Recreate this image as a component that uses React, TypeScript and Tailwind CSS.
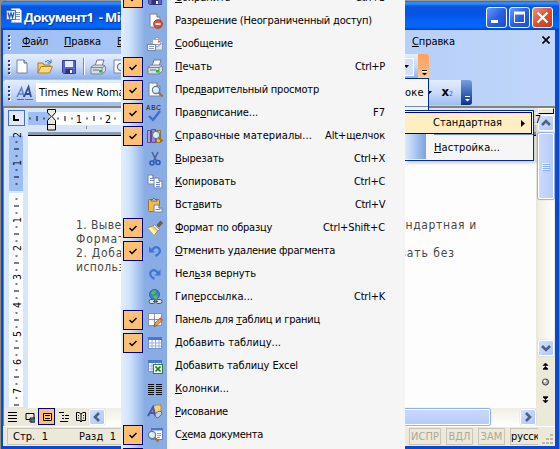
import React, { useLayoutEffect, useRef, useState } from 'react';

// Spreads a label over a known width by adjusting its letter spacing
const Fit: React.FC<{ text: string; width: number; className?: string }> = ({ text, width, className = '' }) => {
  const ref = useRef<HTMLSpanElement>(null);
  const [spacing, setSpacing] = useState(0);
  const i = text.indexOf('&');
  const plain = text.replace('&', '');

  useLayoutEffect(() => {
    if (ref.current) {
      setSpacing((width - ref.current.getBoundingClientRect().width) / plain.length);
    }
  }, [plain, width]);

  return (
    <span ref={ref} className={`inline-block whitespace-pre ${className}`} style={{ letterSpacing: spacing }}>
      {i < 0 ? plain : (
        <>
          {text.slice(0, i)}
          <span className="underline decoration-1 underline-offset-1">{text[i + 1]}</span>
          {text.slice(i + 2)}
        </>
      )}
    </span>
  );
};

const Page = ({ x = 3, y = 1, w = 10, h = 13 }) => (
  <>
    <path d={`M${x} ${y}h${w - 3}l3 3v${h - 3}h${-w}z`} fill="#fdfdff" stroke="#7684a8" />
    <path d={`M${x + w - 3} ${y}v3h3`} fill="#cfdcf2" stroke="#55658c" />
  </>
);

const Printer = () => (
  <>
    <path d="M5 7l2-6h7l-2 6z" fill="#fff" stroke="#6d7890" />
    <path d="M1 8l3-2h10l1.5 2v4L12 15H1z" fill="#d8dce4" stroke="#7b8496" />
    <path d="M1 8.5h11v6M12 8.5l3-1.5" fill="none" stroke="#7b8496" />
    <path d="M3 11h6" stroke="#697388" />
    <rect x="9" y="11" width="3" height="2.5" fill="#16c522" />
  </>
);

const Grid = () => (
  <>
    <rect x="1.5" y="2.5" width="13" height="11" fill="#fff" stroke="#7791cc" />
    <rect x="1" y="2" width="14" height="3" fill="#4a76cd" />
    <path d="M2 8h12M2 11h12M5 5v8M8.500 5v8M12 5v8" stroke="#9cb0dc" />
  </>
);

const Lens = ({ x = 9, y = 8 }) => (
  <>
    <path d={`M${x + 2.5} ${y + 2.5}l4 4`} stroke="#ad6b23" strokeWidth="2.300" />
    <circle cx={x} cy={y} r="3.600" fill="#d5efff" stroke="#6c7891" strokeWidth="1.200" />
    <path d={`M${x - 2} ${y}q0-2 2-2`} fill="none" stroke="#fff" />
  </>
);

const icons: Record<string, React.ReactNode> = {
  new: <Page />,
  open: (
    <>
      <path d="M1 14V4h5l1 2h6v3" fill="#f5cd62" stroke="#a8792a" />
      <path d="M1 14L4 7.500h11.500L12.500 14z" fill="#ffdc7d" stroke="#b5822b" />
      <path d="M8 3q3-3 5.500 0M14 .5V4h-3.500" fill="none" stroke="#4369ae" />
    </>
  ),
  save: (
    <>
      <path d="M1.500 1.500h13v13h-12l-1-1z" fill="#5966ca" stroke="#3a3f95" />
      <rect x="4" y="2" width="8" height="6" fill="#e9edfb" />
      <rect x="4.500" y="10" width="7" height="5" fill="#30357e" />
      <rect x="9" y="11" width="2" height="3" fill="#fff" />
    </>
  ),
  perm: (
    <>
      <Page />
      <circle cx="11" cy="11" r="4.300" fill="#e4532f" stroke="#b3371a" />
      <path d="M8.500 11h5" stroke="#fff" strokeWidth="2" />
    </>
  ),
  mail: (
    <>
      <path d="M4 6l6-5 5.500 5v7H4z" fill="#e5ebf6" stroke="#8f9cb8" />
      <path d="M5.500 3.500h8v5h-8z" fill="#fff" stroke="#a1abc0" />
      <rect x="11" y="4.500" width="2" height="2" fill="#e8643c" />
      <path d="M4 7l6 4 5.500-4v7H4z" fill="#dde6f5" stroke="#8f9cb8" />
      <rect x=".5" y="8.500" width="8" height="6" fill="#f8faff" stroke="#7785a5" />
      <path d="M2 10.500h5M2 12.500h5" stroke="#7f97cc" />
    </>
  ),
  print: <Printer />,
  preview: (
    <>
      <Page x={2} w={11} />
      <Lens />
    </>
  ),
  spell: (
    <>
      <text x="-1" y="4.500" fontSize="6.500" fontFamily="Liberation Sans" fill="#111" textLength="15" style={{ letterSpacing: 0 }}>ABC</text>
      <path d="M2 11l4 4 7-9" fill="none" stroke="#3f6fce" strokeWidth="2.400" />
    </>
  ),
  research: (
    <>
      <path d="M.5 2.500h3v12h-3z" fill="#b39ee0" stroke="#5f4b98" />
      <path d="M4.500 1.500h4v13h-4z" fill="#9c88d4" stroke="#5f4b98" />
      <path d="M9.500 2.500h4v12h-4z" fill="#e7bf58" stroke="#94702a" />
      <Lens x={9} y={7} />
    </>
  ),
  cut: (
    <>
      <path d="M5 1l4.500 9M11 1L6.500 10" stroke="#4d6383" strokeWidth="1.600" />
      <circle cx="5" cy="12" r="2" fill="none" stroke="#2a59b8" strokeWidth="1.600" />
      <circle cx="11" cy="11.500" r="2" fill="none" stroke="#2a59b8" strokeWidth="1.600" />
    </>
  ),
  copy: (
    <>
      <Page x={1} y={1} w={8} h={9} />
      <path d="M3 4.500h3M3 6.500h4" stroke="#6b8bd0" />
      <Page x={7} y={4} w={8} h={10} />
      <path d="M9 8.500h4M9 10.500h4M9 12.500h4" stroke="#6b8bd0" />
    </>
  ),
  paste: (
    <>
      <rect x="1.500" y="2.500" width="11" height="12" rx="1" fill="#efbd48" stroke="#9d7022" />
      <path d="M4 4V2.500h2L7 1l1 1.500h2V4z" fill="#e7eaf0" stroke="#77613a" />
      <Page x={7} y={8} w={8} h={7} />
      <path d="M8.500 12.500h5" stroke="#6b8bd0" />
    </>
  ),
  brush: (
    <>
      <path d="M10 5l3.500-4 2 2L12 7z" fill="#8a583b" stroke="#53352c" strokeWidth=".6" />
      <path d="M7.500 4.500l5 5-2 2-5-5z" fill="#e4e8f2" stroke="#657192" strokeWidth=".7" />
      <path d="M5.500 6L1 8l6 7 4-4z" fill="#f6df70" stroke="#a18231" strokeWidth=".8" />
      <path d="M1 8l3-.5L9 12l-2 3z" fill="#fff3b3" />
    </>
  ),
  undo: (
    <>
      <path d="M5 7q4-5 7-1.500T8.500 13" fill="none" stroke="#3d75d5" strokeWidth="2.200" />
      <path d="M2 3.500v6h6z" fill="#3d75d5" />
    </>
  ),
  redo: (
    <>
      <path d="M11 7Q7 2 4 5.500T7.500 13" fill="none" stroke="#3d75d5" strokeWidth="2.200" />
      <path d="M13.500 3.500v6h-6z" fill="#3d75d5" />
    </>
  ),
  link: (
    <>
      <circle cx="7.500" cy="5.500" r="5" fill="#3b83cd" stroke="#32619c" />
      <path d="M4 3q3-3 5-1l-1 3-3 1zM6 7l4-1 1 3-3 1.500z" fill="#56bd4e" />
      <rect x="2" y="10.500" width="6" height="4" rx="2" fill="#dde2ec" stroke="#4c566c" />
      <rect x="9" y="10.500" width="6" height="4" rx="2" fill="#dde2ec" stroke="#4c566c" />
      <path d="M6 12.500h5" stroke="#4c566c" />
    </>
  ),
  tables: (
    <>
      <rect x="1.500" y="1.500" width="13" height="12" fill="#fff" stroke="#8591b3" />
      <path d="M7.500 2v11M2 7.500h12" stroke="#8591b3" />
      <path d="M7 14.500l1-3.500 5.500-5 2 2-5.500 5.500z" fill="#e8a84a" stroke="#7c4c22" strokeWidth=".8" />
      <path d="M13 6l2 2" stroke="#d35a54" strokeWidth="2" />
    </>
  ),
  grid: <Grid />,
  excel: (
    <>
      <Grid />
      <rect x="6.500" y="6.500" width="9" height="9" fill="#eef8ee" stroke="#2c823a" />
      <path d="M8.500 8.500l5 5M13.500 8.500l-5 5" stroke="#23762f" strokeWidth="1.700" />
    </>
  ),
  columns: <path d="M1 3.500h6M9 3.500h6M1 5.500h6M9 5.500h6M1 7.500h6M9 7.500h6M1 9.500h6M9 9.500h6M1 11.500h6M9 11.500h6M1 13.500h6M9 13.500h6" stroke="#111" />,
  draw: (
    <>
      <path d="M6 3l3-2h5v7l-3 2H6z" fill="#f7d46b" stroke="#987c3e" strokeWidth=".8" />
      <path d="M1 12L6 3l2.500 9M3 9h4.500" fill="none" stroke="#4b54b3" strokeWidth="2" />
      <path d="M8 10l4-3q3 0 3 3l-4 4q-3 0-3-4z" fill="#c3cfe4" stroke="#5d6f91" />
    </>
  ),
  map: (
    <>
      <rect x="4.500" y="1.500" width="11" height="11" fill="#fff" stroke="#5f80c2" />
      <rect x="4" y="1" width="12" height="2.500" fill="#4a76cd" />
      <path d="M10 6.500h4M10 8.500h4M10 10.500h3" stroke="#839ed4" />
      <Lens x={5} y={8} />
    </>
  ),
  styles: (
    <>
      <path d="M0 12L4.500 3 7 12M2 9h4" fill="none" stroke="#6384c8" strokeWidth="1.600" />
      <path d="M7 12l4.500-10L14 12M9 9h4" fill="none" stroke="#304b98" strokeWidth="1.800" />
      <path d="M0 14.500h7" stroke="#4669b4" />
      <path d="M8 14.500h8" stroke="#d3474a" />
    </>
  ),
};

const Icon: React.FC<{ name: string; className?: string }> = ({ name, className = '' }) => (
  <svg className={`h-4 w-4 shrink-0 overflow-visible ${className}`} viewBox="0 0 16 16">{icons[name]}</svg>
);

const menu = [
  { label: '&Сохранить', w: 56, icon: 'save', on: true, key: 'Ctrl+S', kw: 30 },
  { label: 'Разрешение (Неограниченный доступ)', w: 197, icon: 'perm' },
  { label: '&Сообщение', w: 58, icon: 'mail' },
  { label: '&Печать', w: 37, icon: 'print', on: true, key: 'Ctrl+P', kw: 30 },
  { label: 'Пред&варительный просмотр', w: 144, icon: 'preview', on: true },
  { label: 'Прав&описание...', w: 83, icon: 'spell', on: true, key: 'F7', kw: 12 },
  { label: '&Справочные материалы...', w: 137, icon: 'research', on: true, key: 'Alt+щелчок', kw: 60 },
  { label: '&Вырезать', w: 49, icon: 'cut', key: 'Ctrl+X', kw: 31 },
  { label: '&Копировать', w: 61, icon: 'copy', key: 'Ctrl+C', kw: 31 },
  { label: 'Вст&авить', w: 47, icon: 'paste', key: 'Ctrl+V', kw: 30 },
  { label: '&Формат по образцу', w: 97, icon: 'brush', on: true, key: 'Ctrl+Shift+C', kw: 62 },
  { label: '&Отменить удаление фрагмента', w: 160, icon: 'undo', on: true },
  { label: 'Нел&ьзя вернуть', w: 81, icon: 'redo' },
  { label: 'Гип&ерссылка...', w: 78, icon: 'link', key: 'Ctrl+K', kw: 31 },
  { label: 'Панель для &таблиц и границ', w: 145, icon: 'tables', on: true },
  { label: '&Добавить таблицу...', w: 106, icon: 'grid', on: true },
  { label: '&Добавить таблицу Excel', w: 123, icon: 'excel' },
  { label: '&Колонки...', w: 54, icon: 'columns' },
  { label: '&Рисование', w: 53, icon: 'draw' },
  { label: 'С&хема документа', w: 88, icon: 'map', on: true },
  { label: '', w: 0, icon: '', on: true },
];

const Grip = () => (
  <div className="flex w-[3px] shrink-0 flex-col gap-[2px]">
    {[0, 1, 2, 3].map(i => <div key={i} className="h-[2px] w-[2px] bg-[#27417b] shadow-[1px_1px_0_#fff]" />)}
  </div>
);

const Chevron: React.FC<{ d: string }> = ({ d }) => (
  <div className="h-4 w-4 shrink-0 rounded-[2px] border border-white bg-gradient-to-br from-[#d3e0fd] to-[#aec6f6] shadow-[0_0_1px_#7c99d8]">
    <svg viewBox="0 0 14 14" className="h-[14px] w-[14px]"><path d={d} fill="none" stroke="#4d6185" strokeWidth="2.600" /></svg>
  </div>
);

const CaptionButton: React.FC<{ red?: boolean; children: React.ReactNode }> = ({ red, children }) => (
  <div className={`h-[21px] w-[21px] rounded-[3px] border border-white bg-gradient-to-br ${red ? 'from-[#ee9478] via-[#df4f2b] to-[#c43c18]' : 'from-[#6c98f6] via-[#2b60e4] to-[#1a4fd0]'}`}>
    <svg viewBox="0 0 19 19" className="h-[19px] w-[19px]">{children}</svg>
  </div>
);

// One ruler unit is 28.5px, quarters are drawn as dot, dash, dot
const Ruler: React.FC<{ length: number; zero: number; vertical?: boolean }> = ({ length, zero, vertical }) => {
  const marks: React.ReactNode[] = [];
  for (let q = -8; q < 72; q++) {
    const p = Math.round(zero + q * 7.12);
    if (p < -2 || p > length || q === 0) continue;
    const at = vertical ? `translate(7.5 ${p}) rotate(-90)` : `translate(${p} 6.5)`;
    marks.push(
      <g key={q} transform={at}>
        {q % 4 === 0
          ? <text y="4" textAnchor="middle" fontSize="10.500" fontFamily="DejaVu Sans Condensed, DejaVu Sans, sans-serif">{Math.abs(q / 4)}</text>
          : <rect x="-.5" y={q % 2 ? -1 : -2.5} width="1" height={q % 2 ? 2 : 5} />}
      </g>
    );
  }
  return (
    <svg className="block overflow-visible" width={vertical ? 14 : length} height={vertical ? length : 13}>
      {marks}
    </svg>
  );
};

const TitleBar = () => (
  <div className="flex h-[30px] shrink-0 items-center border-t border-[#9a9a92] bg-[linear-gradient(180deg,#0b6dee_0%,#3a94ff_7%,#0656e4_18%,#0553e0_45%,#0464fa_72%,#0366ff_88%,#0243c0_100%)] pr-[6px] pl-1">
    <svg viewBox="0 0 16 16" className="mt-px ml-px h-4 w-4 shrink-0">
      <path d="M5.500.5h8l2 2v12h-10z" fill="#fff" stroke="#9ab3e2" />
      <path d="M10 4.500h4M10 6.500h4M10 8.500h4M7 11.500h7" stroke="#7a95cf" />
      <rect x=".5" y="2.500" width="9" height="9" fill="#e8effc" stroke="#5173bd" />
      <path d="M2 4.500l1.500 5L5 5l1.500 4.500 1.500-5" fill="none" stroke="#2d55ac" strokeWidth="1.300" />
    </svg>
    <Fit text="Документ1  - Microsoft Word" width={172} className="mt-[3px] ml-[2px] font-['Open_Sans'] text-[13px] leading-4 font-bold text-white [font-stretch:normal] [text-shadow:1px_1px_1px_#0a2d88]" />
    <div className="mt-[3px] ml-auto flex gap-[2px]">
      <CaptionButton><path d="M4 13.500h7" stroke="#fff" strokeWidth="3" /></CaptionButton>
      <CaptionButton><path d="M4.500 5v9.500h10V5" fill="none" stroke="#fff" /><path d="M4 5h11" stroke="#fff" strokeWidth="3" /></CaptionButton>
      <CaptionButton red><path d="M4.500 4.500l10 10M14.500 4.500l-10 10" stroke="#fff" strokeWidth="2.200" /></CaptionButton>
    </div>
  </div>
);

const Toolbars = () => (
  <div className="h-[76px] shrink-0 bg-gradient-to-r from-[#9ebef5] to-[#c0d6fa]">
    <div className="flex h-6 items-center pr-[5px] pl-[5px]">
      <Grip />
      <Fit text="&Файл" width={26} className="ml-[11px]" />
      <Fit text="&Правка" width={37} className="ml-4" />
      <Fit text="&Вид" width={20} className="ml-4" />
      <Fit text="&Справка" width={43} className="ml-auto" />
      <svg className="ml-[87px] h-2 w-2 -translate-y-[2px]" viewBox="0 0 8 8"><path d="M.5.5l7 7M7.500.5l-7 7" stroke="#000" strokeWidth="1.700" /></svg>
    </div>
    <div className="flex h-[25px] w-[426px] overflow-hidden rounded-[3px] bg-gradient-to-b from-[#e3edfd] via-[#c8dbfa] to-[#8caeea]">
      <div className="flex w-[415px] items-center pl-[5px]">
        <Grip />
        <Icon name="new" className="ml-[3px]" />
        <Icon name="open" className="ml-[7px]" />
        <Icon name="save" className="ml-2" />
        <div className="ml-[6px] h-[17px] w-px bg-[#6a8ccb] shadow-[1px_0_0_#fff]" />
        <Icon name="print" className="ml-[6px]" />
        <Icon name="preview" className="ml-[6px]" />
        <div className="mr-1 ml-auto flex h-[18px] w-4 items-center justify-center border border-white bg-[#d1e1fb]">
          <svg viewBox="0 0 5 3" className="h-[3px] w-[5px]"><path d="M0 0h5L2.500 3z" /></svg>
        </div>
      </div>
      <div className="relative w-[11px] bg-gradient-to-b from-[#ffa15e] via-[#ffad70] to-[#ffd3a0]">
        <svg viewBox="0 0 7 8" className="absolute bottom-[2px] left-[3px] h-2 w-[7px]">
          <path d="M1 1.500h5" stroke="#000" />
          <path d="M1 2.500h5" stroke="#fff" />
          <path d="M1 4h5L3.500 6.500z" />
        </svg>
      </div>
    </div>
    <div className="mt-px flex h-[25px] w-[469px] overflow-hidden rounded-[3px] bg-gradient-to-b from-[#e3edfd] via-[#c8dbfa] to-[#9dbcf0]">
      <div className="flex w-[458px] items-center pl-[5px]">
        <Grip />
        <Icon name="styles" className="ml-[6px]" />
        <div className="ml-[3px] flex h-[19px] w-[120px] items-center bg-white pl-[3px]"><Fit text="Times New Roman" width={92} /></div>
        <svg viewBox="0 0 5 3" className="ml-auto h-[3px] w-[5px]"><path d="M0 0h5L2.500 3z" /></svg>
        <div className="mr-2 ml-[9px] flex items-baseline">
          <b className="text-[13px] leading-4">x</b>
          <span className="text-[7px] leading-4 text-[#3564c9]">2</span>
        </div>
      </div>
      <div className="relative w-[11px] bg-gradient-to-b from-[#779fe0] to-[#0b318c]">
        <svg viewBox="0 0 7 8" className="absolute bottom-[2px] left-[3px] h-2 w-[7px]"><path d="M1 1.500h5" stroke="#fff" /><path d="M1 4h5L3.500 6.500z" fill="#fff" /></svg>
      </div>
    </div>
  </div>
);

const DocumentArea = () => (
  <div className="flex min-h-0 flex-1 border-t-2 border-l border-[#84836e] bg-[#d8e6fa]">
    <div className="flex w-6 shrink-0 flex-col items-center">
      <div className="mt-[2px] flex h-4 w-[17px] shrink-0 items-center justify-center border border-[#4772c8] bg-[#dfe9fa]">
        <div className="h-[6px] w-[6px] border-b-2 border-l-2 border-black" />
      </div>
      <div className="mt-[10px] w-[14px] bg-[linear-gradient(180deg,#9ebef5_0,#9ebef5_55px,#d8e6fa_55px,#d8e6fa_57px,#fff_57px)]">
        <Ruler vertical length={271} zero={55.5} />
      </div>
    </div>
    <div className="flex min-w-0 flex-1 flex-col">
      <div className="h-7 shrink-0 border-b border-black bg-[linear-gradient(180deg,#d8e6fa_0,#d8e6fa_24px,#8e99b3_24px)] pt-1">
        <div className="relative h-[13px] w-[509px] bg-[linear-gradient(90deg,#9ebef5_21px,#fff_21px)]">
          <Ruler length={509} zero={23} />
          <svg viewBox="0 0 9 22" className="absolute -top-[3px] left-[19px] h-[22px] w-[9px]">
            <path d="M.5.5h8v3l-3.500 4 3.500 4v9.500h-8v-9.500L4 7.500.5 3.500z" fill="#ece9d8" stroke="#000" />
            <path d="M0 15.500h9" stroke="#000" />
          </svg>
        </div>
        <div className="mt-px ml-[58px] h-[3px] w-px bg-[#8a8a8a]" />
      </div>
      <div className="flex-1 bg-[#fdfdfe] pt-[82px] pl-12 font-['DejaVu_Sans'] text-[12px] leading-[14px] text-[#484848]">
        <div className="flex"><Fit text="1. Выведите панели" width={122} /><Fit text="Стандартная и" width={94} className="ml-[185px]" /></div>
        <Fit text="Форматирование" width={111} />
        <div className="flex"><Fit text="2. Добавьте кнопку" width={124} /><Fit text="вызвать без" width={79} className="ml-[176px]" /></div>
        <Fit text="использования" width={91} />
      </div>
    </div>
    <div className="flex w-[19px] shrink-0 flex-col items-center bg-[#ece9d8]">
      <div className="h-[6px] w-4 border border-t-white border-r-black border-b-black border-l-white" />
      <div className="flex flex-1 flex-col items-center bg-gradient-to-r from-[#f0efe6] to-[#fefefb]">
        <div className="mt-px"><Chevron d="M3 9l4-4 4 4" /></div>
        <div className="mt-[2px] flex h-[66px] w-4 flex-col items-center justify-center gap-px rounded-[2px] border border-white bg-gradient-to-r from-[#cad9fd] to-[#b7cdf9] shadow-[0_0_1px_1px_#8baae5]">
          {[0, 1, 2, 3].map(i => <div key={i} className="h-px w-[7px] bg-[#eef4fe] shadow-[1px_1px_0_#8cb0f8]" />)}
        </div>
        <div className="mt-auto"><Chevron d="M3 5l4 4 4-4" /></div>
      </div>
      <svg viewBox="0 0 16 52" className="h-[52px] w-4 shrink-0">
        <path d="M5 9.500L7.500 7l2.500 2.500zM5 13l2.500-2.500L10 13zM5 13.500h5M7.500 8v5" stroke="#000" strokeWidth=".6" />
        <circle cx="7.500" cy="26" r="3" fill="#b9b9b5" stroke="#333" />
        <circle cx="6.700" cy="25" r="1.200" fill="#fff" />
        <path d="M5 40.500h5M5 41l2.500 2.500L10 41zM5 44.500L7.500 47l2.500-2.500zM7.500 41v5" stroke="#000" strokeWidth=".6" />
      </svg>
    </div>
  </div>
);

const viewIcons = [
  'M0 2.500h9M0 5.500h9M0 8.500h9M0 11.500h9',
  'M1 3.500h8v5M1 3.500v6h4M5 8h5v4h-5z',
  'M1.500 3.500h8v7h-8zM3 5.500h5M3 8.500h5',
  'M0 2.500h5M3 5.500h2M6 5.500h4M3 8.500h2M6 8.500h4M1 11.500h8',
  'M5 4L3 2.500H.5v8H4L5 12l1-1.500h3.500v-8H7zV12M2 5.500h1M7 5.500h1M2 8h1M7 8h1',
];

const BottomBar = () => (
  <div className="flex h-[18px] shrink-0 border-l border-[#84836e] bg-[#ece9d8] pr-[19px]">
    <div className="flex w-[85px] items-start">
      {viewIcons.map((d, i) => (
        <div key={i} className={`flex h-[17px] w-[17px] items-center justify-center ${i === 2 ? 'border border-[#000080] bg-[#ffc074]' : ''}`}>
          <svg viewBox="0 0 10 14" className="h-[14px] w-[10px] shrink-0">
            <path d={d} fill="none" stroke="#000" />
            {i === 1 && <path d="M6 9h4v3H6z" fill="#3d8e50" stroke="#1d3f9c" />}
          </svg>
        </div>
      ))}
    </div>
    <div className="flex flex-1 items-center bg-gradient-to-b from-[#f0efe6] to-[#fefefb]">
      <Chevron d="M9 3L5 7l4 4" />
      <div className="ml-[100px] h-4 w-[285px] rounded-[2px] border border-white bg-gradient-to-b from-[#cad9fd] to-[#b5cbfa] shadow-[0_0_1px_1px_#8baae5]" />
      <div className="ml-auto"><Chevron d="M5 3l4 4-4 4" /></div>
    </div>
  </div>
);

const StatusBar = () => (
  <div className="flex h-5 shrink-0 items-center border-t border-white bg-[#ece9d8] pr-px pl-[4px]">
    <div className="flex h-[17px] w-[330px] items-center border border-[#c9c6b6] pl-[5px]">
      <Fit text="Стр.  1" width={35} />
      <Fit text="Разд  1" width={37} className="ml-[31px]" />
    </div>
    <div className="ml-auto flex gap-[5px] text-[#aca899]">
      <div className="flex h-[17px] w-8 items-center justify-center border border-[#c9c6b6]"><Fit text="ИСПР" width={28} /></div>
      <div className="flex h-[17px] w-[27px] items-center justify-center border border-[#c9c6b6]"><Fit text="ВДЛ" width={22} /></div>
      <div className="flex h-[17px] w-[27px] items-center justify-center border border-[#c9c6b6]"><Fit text="ЗАМ" width={22} /></div>
      <div className="flex h-[17px] w-7 items-center overflow-hidden border border-r-0 border-[#c9c6b6] text-black"><Fit text="русский" width={41} className="shrink-0" /></div>
    </div>
    <svg viewBox="0 0 12 12" className="mt-1 ml-[4px] h-3 w-3 shrink-0">
      <path d="M8 1h3v2H8zM4 5h3v2H4zM8 5h3v2H8zM0 9h3v2H0zM4 9h3v2H4zM8 9h3v2H8z" fill="#bbb7a5" />
    </svg>
  </div>
);

const ButtonsMenu = () => (
  <div className="absolute -top-[13px] left-[121px] w-[284px] bg-[#f5f5f5]">
    {menu.map((item, i) => (
      <div key={i} className="flex h-[23px] items-center">
        <div className="flex h-full w-[46px] shrink-0 items-center bg-[linear-gradient(90deg,#e2eeff_0,#cfe2fc_9px,#89ace5_24px,#89ace5_100%)] pl-[2px]">
          <div className={`mb-px flex h-5 w-5 shrink-0 items-center justify-center ${item.on ? 'border border-[#000080] bg-[#ffc074]' : ''}`}>
            {item.on && <svg viewBox="0 0 8 7" className="h-[7px] w-2"><path d="M.5 3l2.500 2.500L7.500 1" fill="none" stroke="#000" strokeWidth="1.500" /></svg>}
          </div>
          <Icon name={item.icon} className="mb-px ml-1" />
        </div>
        <Fit text={item.label} width={item.w} className="mb-px ml-2" />
        {item.key && <Fit text={item.key} width={item.kw || 30} className="mr-5 mb-px ml-auto" />}
      </div>
    ))}
  </div>
);

const SubMenus = () => (
  <>
    <div className="absolute top-[78px] left-[405px] h-[33px] w-6 overflow-hidden border-t border-r border-[#002d96] bg-[#f6f6f6]">
      <div className="flex h-[28px] items-center border-b border-[#6a8ccb]"><Fit text="оке" width={19} /></div>
    </div>
    <div className="absolute top-[110px] left-[405px] h-[51px] w-[129px] border border-l-0 border-[#002d96] bg-[#f6f6f6] pt-px shadow-[2px_2px_3px_#0003]">
      <div className="flex h-[22px] w-[127px] items-center border border-l-0 border-[#000080] bg-[#ffeec2] pl-7">
        <Fit text="Стандартная" width={69} />
        <svg viewBox="0 0 4 7" className="ml-[19px] h-[7px] w-1"><path d="M0 0v7l4-3.500z" /></svg>
      </div>
      <div className="flex h-[25px]">
        <div className="w-[21px] bg-gradient-to-r from-[#dceaff] to-[#7ba3e0]" />
        <div className="ml-2 flex-1 border-t border-[#6a8ccb] pt-[5px]"><Fit text="&Настройка..." width={66} /></div>
      </div>
    </div>
  </>
);

const App: React.FC = () => (
  <div className="relative h-[449px] w-[560px] overflow-hidden bg-[#8d8b84] pr-px pl-px font-['DejaVu_Sans_Condensed','DejaVu_Sans',sans-serif] text-[11px] leading-4 text-black [font-stretch:condensed]">
    <div className="flex h-full flex-col overflow-hidden rounded-t-[6px] bg-[#0a4bd8]">
      <TitleBar />
      <div className="flex min-h-0 flex-1 flex-col border-r-4 border-b-[3px] border-l-2 border-[#0a48d2]">
        <Toolbars />
        <DocumentArea />
        <BottomBar />
        <StatusBar />
      </div>
    </div>
    <SubMenus />
    <ButtonsMenu />
  </div>
);

export default App;
